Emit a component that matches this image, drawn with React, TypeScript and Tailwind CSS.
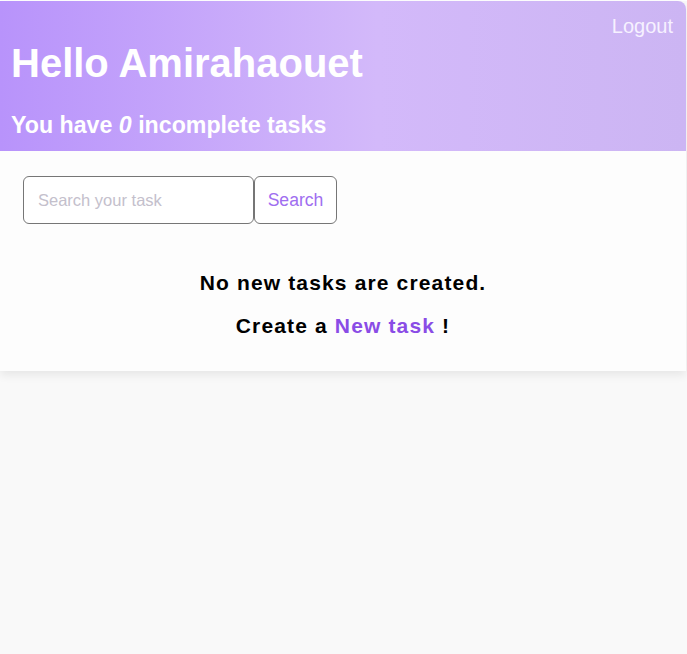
const font = { fontFamily: '"Liberation Sans", Arial, sans-serif' };

function Header() {
  return (
    <header className="flex flex-col rounded-tr-lg bg-[linear-gradient(90deg,#b893fb_0%,#d3b9fa_55%,#ccb5f3_100%)] pl-[11px] pr-[13px] pt-[14px] pb-[13px] text-white">
      <button className="self-end text-[20px] leading-[23px] text-[#f6f1ff]">Logout</button>
      <h1 className="mt-[2px] text-[40px] font-bold leading-[46px]">Hello Amirahaouet</h1>
      <h2 className="mt-[26px] text-[23.2px] font-bold leading-[26px]">
        You have <em>0</em> incomplete tasks
      </h2>
    </header>
  );
}

function SearchBar() {
  return (
    <form className="flex" onSubmit={(e) => e.preventDefault()}>
      <input
        type="text"
        placeholder="Search your task"
        className="h-[48px] w-[231px] rounded-[6px] border border-[#767676] bg-white px-[14px] text-[16.5px] outline-none placeholder:text-[#c4c0cc]"
        style={font}
      />
      <button
        type="submit"
        className="h-[48px] w-[83px] rounded-[6px] border border-[#767676] bg-white text-[17.6px] text-[#a06ef0]"
        style={font}
      >
        Search
      </button>
    </form>
  );
}

export default function App() {
  return (
    <div className="min-h-screen bg-[#f9f9f9]" style={font}>
      <div className="mr-px mt-px rounded-tr-lg bg-[#fdfdfd] shadow-[0_4px_10px_rgba(0,0,0,0.08)]">
        <Header />
        <main className="px-[23px] pt-[25px] pb-[33px]">
          <SearchBar />
          <p className="mt-[47px] text-center text-[21px] font-bold leading-[24px] tracking-[1.15px] text-black">
            No new tasks are created.
          </p>
          <p className="mt-[19px] text-center text-[21px] font-bold leading-[24px] tracking-[1.15px] text-black">
            Create a <a href="#" className="text-[#8a4ce6]">New task</a> !
          </p>
        </main>
      </div>
    </div>
  );
}
